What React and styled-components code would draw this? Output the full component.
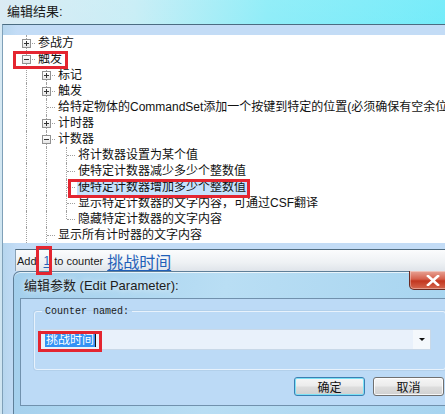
import React from 'react';
import styled, { createGlobalStyle } from 'styled-components';

const GlobalStyle = createGlobalStyle`
  body {
    margin: 0;
    font-family: "Liberation Sans", "Noto Sans CJK SC", sans-serif;
  }
`;

const UI_FONT = `"Liberation Sans", "Noto Sans CJK SC", sans-serif`;

const Screen = styled.div`
  position: relative;
  width: 445px;
  height: 414px;
  overflow: hidden;
  display: flex;
  flex-direction: column;
  background:
    linear-gradient(180deg, rgba(255, 255, 255, 0.25) 0%, rgba(255, 255, 255, 0) 60%),
    linear-gradient(90deg, #cfe5f1 0%, #b9e9f3 30%, #6fe8f6 60%, #4be6f8 100%);
  font-family: ${UI_FONT};
`;

const TopLabel = styled.div`
  height: 24px;
  flex: none;
  padding-left: 7px;
  font-size: 13px;
  line-height: 24px;
  color: #1a1a1a;
`;

const EditorPanel = styled.div`
  flex: 1;
  margin-left: 2px;
  display: flex;
  flex-direction: column;
  border-top: 1px solid #4b6c82;
  border-left: 1px solid #7fa0b8;
  background: linear-gradient(90deg, #b6d6ee 0px, #c3dcf6 14px);
`;

const PanelStrip = styled.div`
  height: 10px;
  flex: none;
`;

const Tree = styled.div`
  height: 208px;
  flex: none;
  background: #fff;
  padding-left: 13px;
  overflow: hidden;
`;

const Row = styled.div`
  height: 16px;
  display: flex;
  align-items: stretch;
  white-space: nowrap;
`;

const Guide = styled.div`
  position: relative;
  width: 20px;
  flex: none;
  &::before {
    content: '';
    position: absolute;
    left: 10px;
    top: 0;
    height: ${(p) => (p.$half ? '8px' : '16px')};
    border-left: 1px dotted ${(p) => (p.$line ? '#a0a0a0' : 'transparent')};
  }
  &::after {
    content: '';
    position: absolute;
    left: 11px;
    top: 8px;
    width: ${(p) => (p.$own ? '8px' : '0')};
    border-top: 1px dotted #a0a0a0;
  }
`;

const Expander = styled.span`
  position: absolute;
  left: 6px;
  top: 4px;
  width: 7px;
  height: 7px;
  z-index: 1;
  border: 1px solid #919191;
  background: linear-gradient(180deg, #ffffff, #e6e6e6);
  &::before {
    content: '';
    position: absolute;
    left: 1px;
    top: 3px;
    width: 5px;
    border-top: 1px solid #333;
  }
  &::after {
    content: '';
    position: absolute;
    left: 3px;
    top: 1px;
    height: 5px;
    border-left: 1px solid #333;
    display: ${(p) => (p.$open ? 'none' : 'block')};
  }
`;

const Label = styled.span`
  margin-left: 1px;
  padding: 0 1px;
  font-size: 12px;
  line-height: 16px;
  color: #111;
  background: ${(p) => (p.$selected ? '#c6e2fd' : 'transparent')};
`;

const StatusGap = styled.div`
  height: 6px;
  flex: none;
`;

const StatusBar = styled.div`
  height: 21px;
  flex: none;
  margin-left: 12px;
  padding-left: 1px;
  display: flex;
  align-items: center;
  border-top: 1px solid #4f6b80;
  border-left: 1px solid #8aa2b6;
  background: linear-gradient(180deg, #fbfcfd 0%, #eef1f4 60%, #dfe4ea 100%);
  font-size: 11px;
  color: #1a1a1a;
`;

const Word = styled.span`
  margin-right: ${(p) => p.$gap || 0}px;
`;

const Link = styled.span`
  color: ${(p) => (p.$big ? '#1f5fb8' : '#2a62b8')};
  font-size: ${(p) => (p.$big ? '16px' : '12px')};
  margin-right: ${(p) => p.$gap || 0}px;
  text-decoration: underline;
  text-decoration-thickness: 1px;
  text-underline-offset: 2px;
`;

const Dialog = styled.div`
  flex: 1;
  width: 436px;
  margin-left: 10px;
  padding: 0 9px 8px 6px;
  display: flex;
  flex-direction: column;
  border: 1px solid #5f7f98;
  border-bottom: none;
  border-radius: 7px 7px 0 0;
  background: linear-gradient(100deg, #a3cfec 0%, #b9def4 45%, #a5d3ef 100%);
  box-shadow: inset 0 1px 0 rgba(255, 255, 255, 0.7);
`;

const TitleBar = styled.div`
  height: 26px;
  flex: none;
  display: flex;
  align-items: flex-start;
  justify-content: space-between;
`;

const Title = styled.div`
  padding: 3px 0 0 4px;
  font-size: 13px;
  color: #1c1c1c;
  text-shadow: 0 0 6px rgba(255, 255, 255, 0.9);
`;

const CloseButton = styled.div`
  width: 45px;
  height: 18px;
  margin-top: -1px;
  display: flex;
  align-items: center;
  justify-content: center;
  border: 1px solid #6a2a22;
  border-top: none;
  border-radius: 0 0 5px 5px;
  background: linear-gradient(180deg, #e8a496 0%, #d5604c 45%, #c2361f 55%, #d5674e 100%);
  box-shadow: inset 0 0 0 1px rgba(255, 255, 255, 0.35);
`;

const Client = styled.div`
  flex: 1;
  display: flex;
  flex-direction: column;
  border: 1px solid #7191ad;
  background: #bcdaf6;
`;

const GroupBox = styled.fieldset`
  margin: 7px 9px 0 13px;
  padding: 12px 14px 0 5px;
  height: 50px;
  border: 1px solid #e8f2fc;
  border-radius: 3px;
  box-shadow: 0 0 0 1px rgba(160, 190, 215, 0.35);
  legend {
    padding: 0 3px;
    margin-left: 2px;
    font-family: "Liberation Mono", monospace;
    font-size: 10px;
    color: #1a1a1a;
  }
`;

const Combo = styled.div`
  height: 19px;
  display: flex;
  align-items: center;
  background: #e9f1fb;
  border: 1px solid #c8d8e8;
  padding-left: 4px;
`;

const ComboText = styled.span`
  font-size: 12px;
  line-height: 14px;
  padding: 0 1px;
  color: #fff;
  background: #3392f4;
`;

const Caret = styled.span`
  width: 1px;
  height: 14px;
  background: #111;
`;

const ComboArrow = styled.div`
  margin-left: auto;
  width: 17px;
  height: 19px;
  display: flex;
  align-items: center;
  justify-content: center;
  background: #f4f8fc;
  &::before {
    content: '';
    border-left: 3px solid transparent;
    border-right: 3px solid transparent;
    border-top: 3px solid #111;
  }
`;

const ButtonRow = styled.div`
  display: flex;
  justify-content: flex-end;
  gap: 8px;
  padding: 7px 11px 0 0;
`;

const Button = styled.div`
  width: 69px;
  height: 17px;
  display: flex;
  align-items: center;
  justify-content: center;
  font-size: 12px;
  color: #111;
  border: 1px solid ${(p) => (p.$default ? '#3b7fb3' : '#707070')};
  border-radius: 3px;
  background: linear-gradient(180deg, #f6f6f6 0%, #ebebeb 48%, #dddddd 52%, #d0d0d0 100%);
  box-shadow: inset 0 0 0 1px ${(p) => (p.$default ? '#7ce2f6' : 'rgba(255,255,255,0.8)')};
`;

const Mark = styled.div`
  position: absolute;
  border: 3px solid #e42530;
  pointer-events: none;
`;

const rows = [
  { level: 0, text: '参战方', exp: 'closed', guides: [] },
  { level: 0, text: '触发', exp: 'open', guides: [] },
  { level: 1, text: '标记', exp: 'closed', guides: [true] },
  { level: 1, text: '触发', exp: 'closed', guides: [true] },
  {
    level: 1,
    text: '给特定物体的CommandSet添加一个按键到特定的位置(必须确保有空余位置)',
    guides: [true],
  },
  { level: 1, text: '计时器', exp: 'closed', guides: [true] },
  { level: 1, text: '计数器', exp: 'open', guides: [true] },
  { level: 2, text: '将计数器设置为某个值', guides: [true, true] },
  { level: 2, text: '使特定计数器减少多少个整数值', guides: [true, true] },
  { level: 2, text: '使特定计数器增加多少个整数值', guides: [true, true], selected: true },
  { level: 2, text: '显示特定计数器的文字内容，可通过CSF翻译', guides: [true, true] },
  { level: 2, text: '隐藏特定计数器的文字内容', guides: [true, true], last: true },
  { level: 1, text: '显示所有计时器的文字内容', guides: [true] },
];

function TreeRow({ row }) {
  return (
    <Row>
      {row.guides.map((on, i) => (
        <Guide key={i} $line={on} />
      ))}
      <Guide $line $own $half={row.last}>
        {row.exp && <Expander $open={row.exp === 'open'} />}
      </Guide>
      <Label $selected={row.selected}>{row.text}</Label>
    </Row>
  );
}

export default function App() {
  return (
    <Screen>
      <GlobalStyle />
      <TopLabel>编辑结果:</TopLabel>
      <EditorPanel>
        <PanelStrip />
        <Tree>
          {rows.map((row, i) => (
            <TreeRow key={i} row={row} />
          ))}
        </Tree>
        <StatusGap />
        <StatusBar>
          <Word $gap={7}>Add</Word>
          <Link $gap={4}>1</Link>
          <Word $gap={4}>to counter</Word>
          <Link $big>挑战时间</Link>
        </StatusBar>
        <Dialog>
          <TitleBar>
            <Title>编辑参数 (Edit Parameter):</Title>
            <CloseButton>
              <svg width="14" height="11" viewBox="0 0 14 11">
                <path
                  d="M2 1 L12 10 M12 1 L2 10"
                  stroke="#fff"
                  strokeWidth="2.6"
                  strokeLinecap="square"
                />
              </svg>
            </CloseButton>
          </TitleBar>
          <Client>
            <GroupBox>
              <legend>Counter named:</legend>
              <Combo>
                <ComboText>挑战时间</ComboText>
                <Caret />
                <ComboArrow />
              </Combo>
            </GroupBox>
            <ButtonRow>
              <Button $default>确定</Button>
              <Button>取消</Button>
            </ButtonRow>
          </Client>
        </Dialog>
      </EditorPanel>
      <Mark style={{ left: 13, top: 51, width: 49, height: 12 }} />
      <Mark style={{ left: 68, top: 179, width: 176, height: 13 }} />
      <Mark style={{ left: 36, top: 246, width: 10, height: 23 }} />
      <Mark style={{ left: 38, top: 331, width: 58, height: 15 }} />
    </Screen>
  );
}
